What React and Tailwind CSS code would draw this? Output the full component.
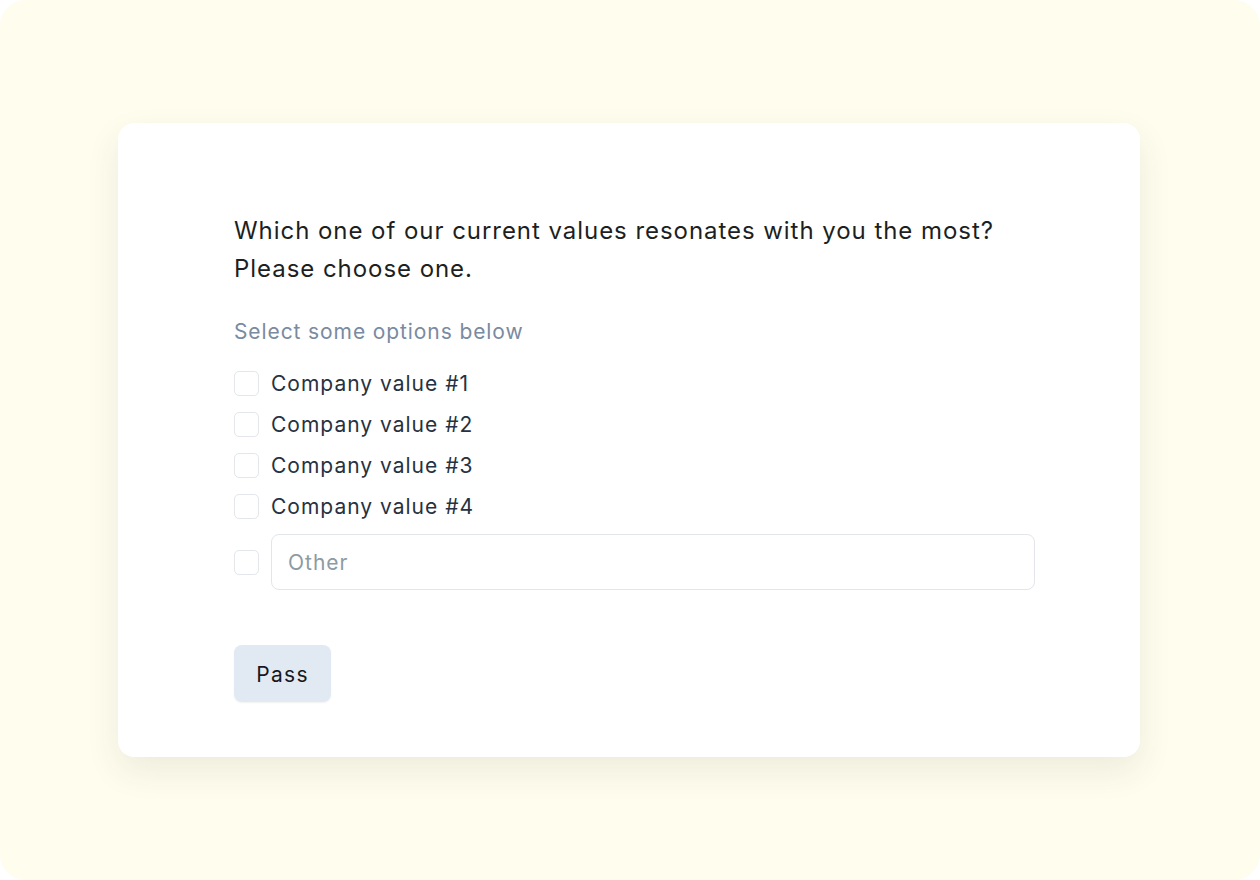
import React, { useState } from 'react';

const options = ['Company value #1', 'Company value #2', 'Company value #3', 'Company value #4'];

const Checkbox = ({ checked, onChange }) => (
  <button
    type="button"
    onClick={onChange}
    className={`w-[25px] h-[25px] shrink-0 rounded-[5px] border ${
      checked ? 'bg-slate-700 border-slate-700' : 'bg-white border-[#e3e6ea]'
    }`}
  />
);

const App = () => {
  const [selected, setSelected] = useState([]);
  const [other, setOther] = useState('');

  const toggle = (key) => {
    setSelected((prev) => (prev.includes(key) ? prev.filter((k) => k !== key) : [...prev, key]));
  };

  return (
    <div className="bg-white w-[1260px] h-[880px]" style={{ fontFamily: 'Inter, "Noto Sans", sans-serif' }}>
      <div className="w-full h-full rounded-[26px] bg-[#fffdee] flex items-center justify-center">
        {/* Survey card */}
        <div className="w-[1022px] -translate-x-px bg-white rounded-[16px] shadow-[0_14px_34px_rgba(60,60,30,0.09)] pt-[89px] pb-[55px] pl-[116px] pr-[105px] flex flex-col">
          <h1 className="text-[24px] leading-[38px] text-[#1d1f22] font-normal tracking-[0.95px]">
            Which one of our current values resonates with you the most?
            <br />
            Please choose one.
          </h1>

          <p className="mt-[30px] text-[21px] leading-[28px] tracking-[0.9px] text-[#7a8aa1]">Select some options below</p>

          <div className="mt-[17px] flex flex-col">
            {options.map((label) => (
              <label key={label} className="h-[41px] flex items-center gap-3 cursor-pointer">
                <Checkbox checked={selected.includes(label)} onChange={() => toggle(label)} />
                <span className="text-[21px] tracking-[1px] text-[#263241]">{label}</span>
              </label>
            ))}
          </div>

          <div className="mt-[7px] flex items-center gap-3">
            <Checkbox checked={selected.includes('other')} onChange={() => toggle('other')} />
            <input
              value={other}
              onChange={(e) => setOther(e.target.value)}
              placeholder="Other"
              className="flex-1 min-w-0 h-[56px] rounded-[8px] border border-[#e2e6ea] px-4 text-[21px] tracking-[1px] text-[#263241] placeholder:text-[#8c9ba4] outline-none"
            />
          </div>

          <div className="mt-[55px]">
            <button className="w-[97px] h-[57px] pt-[2px] rounded-[8px] bg-[#e1eaf3] shadow-[0_1px_2px_rgba(0,0,0,0.06)] text-[21px] tracking-[1.3px] text-[#15191e]">
              Pass
            </button>
          </div>
        </div>
      </div>
    </div>
  );
};

export default App;
